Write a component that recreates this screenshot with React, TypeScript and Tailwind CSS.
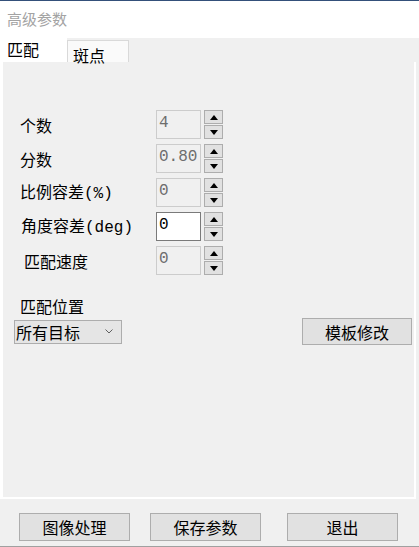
const cjk = { fontFamily: '"Noto Sans CJK SC", "Noto Sans", sans-serif' };
const mono = { fontFamily: '"Liberation Mono", monospace' };

// Up/down spinner beside each number box
function Spinner() {
  return (
    <div className="flex flex-col gap-px">
      <div className="flex h-[14px] w-[19px] items-center justify-center border border-[#adadad] bg-[#e1e1e1]">
        <svg width="8" height="5" viewBox="0 0 8 5">
          <polygon points="4,0 8,5 0,5" fill="#000" />
        </svg>
      </div>
      <div className="flex h-[14px] w-[19px] items-center justify-center border border-[#adadad] bg-[#e1e1e1]">
        <svg width="8" height="5" viewBox="0 0 8 5">
          <polygon points="0,0 8,0 4,5" fill="#000" />
        </svg>
      </div>
    </div>
  );
}

function ParamRow({
  label,
  unit,
  value,
  active,
  indent = 0,
}: {
  label: string;
  unit?: string;
  value: string;
  active?: boolean;
  indent?: number;
}) {
  return (
    <div className="flex h-[29px] items-center">
      <div className="w-[136px] text-[16px] leading-none text-black" style={{ ...cjk, paddingLeft: indent }}>
        {label}
        {unit && <span style={mono}>{unit}</span>}
      </div>
      <div
        className={
          active
            ? 'h-[29px] w-[45px] border border-[#7a7a7a] bg-white px-[2px] pt-[3px] text-[16px] leading-[18px] text-black'
            : 'h-[29px] w-[45px] border border-[#cccccc] bg-[#f0f0f0] px-[2px] pt-[3px] text-[16px] leading-[18px] text-[#6d6d6d]'
        }
        style={mono}
      >
        {value}
      </div>
      <div className="ml-[3px]">
        <Spinner />
      </div>
    </div>
  );
}

function WinButton({ label, className }: { label: string; className: string }) {
  return (
    <button
      className={`flex items-center justify-center border border-[#adadad] bg-[#e1e1e1] text-[16px] text-black ${className}`}
      style={cjk}
    >
      {label}
    </button>
  );
}

export default function App() {
  return (
    <div className="flex h-[547px] w-[419px] flex-col overflow-hidden bg-[#f0f0f0]">
      {/* title bar */}
      <div className="h-px bg-[#34507a]" />
      <div className="flex h-[37px] items-center bg-white pl-[7px] text-[15px] text-[#a3a3a3]" style={cjk}>
        高级参数
      </div>

      {/* tabs */}
      <div className="flex h-[24px] items-end">
        <div className="flex h-[24px] w-[67px] items-start bg-white pl-[7px] pt-[3px] text-[16px] leading-none text-black" style={cjk}>
          匹配
        </div>
        <div className="flex h-[22px] w-[62px] items-start border-x border-t border-[#d9d9d9] bg-[#fafafa] pl-[5px] pt-[6px] text-[16px] leading-none text-black" style={cjk}>
          斑点
        </div>
      </div>

      {/* tab panel */}
      <div className="mr-[3px] flex h-[437px] flex-col border-b-2 border-l-[3px] border-r-2 border-white pl-[17px] pt-[48px]">
        <div className="flex flex-col gap-[5px]">
          <ParamRow label="个数" value="4" />
          <ParamRow label="分数" value="0.80" />
          <ParamRow label="比例容差" unit="(%)" value="0" />
          <ParamRow label="角度容差" unit="(deg)" value="0" active indent={1} />
          <ParamRow label="匹配速度" value="0" indent={4} />
        </div>

        <div className="mt-[23px] text-[16px] leading-none text-black" style={cjk}>
          匹配位置
        </div>
        <div className="-ml-[6px] mt-[4px] flex items-center justify-between pr-[2px]">
          <div
            className="flex h-[24px] w-[108px] items-center justify-between border border-[#adadad] bg-[#e5e5e5] pl-[1px] pr-[8px] text-[16px] text-black"
            style={cjk}
          >
            <span>所有目标</span>
            <svg width="8" height="5" viewBox="0 0 8 5">
              <polyline points="0.5,0.5 4,4 7.5,0.5" fill="none" stroke="#606060" strokeWidth="1" />
            </svg>
          </div>
          <WinButton label="模板修改" className="h-[27px] w-[110px]" />
        </div>
      </div>

      {/* bottom buttons */}
      <div className="flex h-[47px] items-start pl-[19px] pt-[14px]">
        <WinButton label="图像处理" className="h-[28px] w-[111px]" />
        <WinButton label="保存参数" className="ml-[20px] h-[28px] w-[111px]" />
        <WinButton label="退出" className="ml-[26px] h-[28px] w-[111px]" />
      </div>
      <div className="h-px bg-[#a0a0a0]" />
    </div>
  );
}
